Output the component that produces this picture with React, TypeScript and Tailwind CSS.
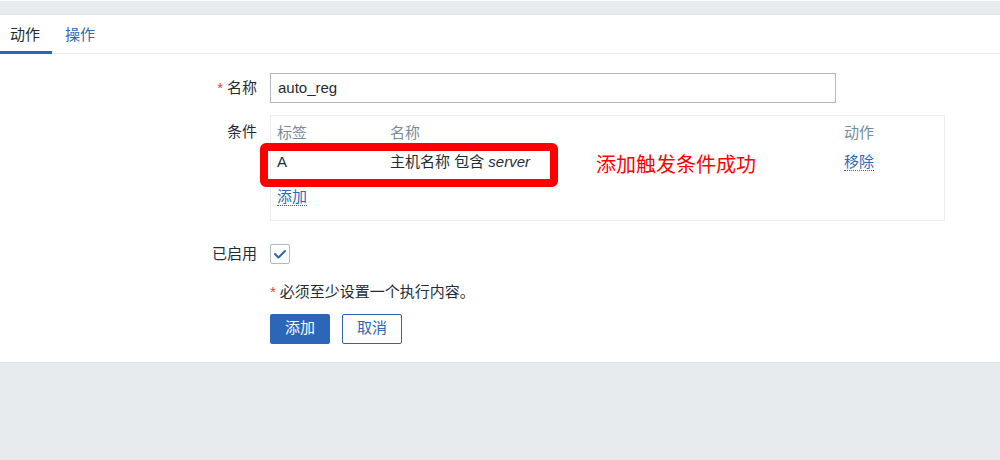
const font = { fontFamily: '"Liberation Sans", "Noto Sans CJK SC", sans-serif' };

function Link({ children }: { children: React.ReactNode }) {
  return (
    <span className="text-[#2a6ab8] border-b border-dotted border-[#2a6ab8] leading-[18px]">{children}</span>
  );
}

export default function App() {
  return (
    <div className="w-[1000px] h-[460px] bg-[#e8ebee] text-[15px] text-[#1f2c33]" style={font}>
      <div className="h-[1px] bg-white" />
      <div className="h-[13px]" />
      <div className="bg-white border-y border-[#dfe4e7] h-[349px]">
        {/* tabs */}
        <div className="flex h-[39px] border-b border-[#ebeef0]">
          <div className="w-[52px] flex items-center justify-center border-b-[3px] border-[#2b67b6] pt-[4px] pr-[2px] -mb-[1px]">
            动作
          </div>
          <div className="px-[13px] flex items-center text-[#2a6ab8] pt-[2px]">操作</div>
        </div>

        <div className="pt-[19px]">
          {/* name */}
          <div className="flex items-center">
            <div className="w-[257px] text-right">
              <span className="text-[#d64541] mr-[4px]">*</span>名称
            </div>
            <div className="ml-[13px] w-[566px] h-[30px] border border-[#acbbc2] flex items-center px-[7px]">
              auto_reg
            </div>
          </div>

          {/* conditions */}
          <div className="flex mt-[12px]">
            <div className="w-[257px] text-right pt-[6px]">条件</div>
            <div className="ml-[13px] relative w-[675px] h-[106px] border border-[#ebeef0] px-[6px] pt-[8px]">
              <div className="flex text-[#768d99] h-[18px] leading-[18px]">
                <div className="w-[113px]">标签</div>
                <div className="w-[454px]">名称</div>
                <div>动作</div>
              </div>
              <div className="flex h-[18px] leading-[18px] mt-[11px]">
                <div className="w-[113px]">A</div>
                <div className="w-[454px]">
                  主机名称 包含 <span className="italic">server</span>
                </div>
                <div>
                  <Link>移除</Link>
                </div>
              </div>
              <div className="mt-[15px] h-[20px]">
                <Link>添加</Link>
              </div>
              <div className="absolute left-[-11px] top-[27px] w-[298px] h-[44px] border-[8px] border-[#ff0000] rounded-[6px]" />
              <div className="absolute left-[325px] top-[36px] text-[20px] leading-[26px] text-[#ff0000]">
                添加触发条件成功
              </div>
            </div>
          </div>

          {/* enabled */}
          <div className="flex items-center mt-[22px]">
            <div className="w-[257px] text-right">已启用</div>
            <div className="ml-[13px] w-[20px] h-[20px] border border-[#acbbc2] rounded-[2px] flex items-center justify-center">
              <svg width="14" height="14" viewBox="0 0 14 14" fill="none">
                <path d="M2 7 L5.5 10.5 L12 4" stroke="#2b67b6" strokeWidth="2" strokeLinecap="round" strokeLinejoin="round" />
              </svg>
            </div>
          </div>

          {/* note */}
          <div className="ml-[270px] mt-[17px] h-[18px] leading-[18px]">
            <span className="text-[#d64541] mr-[4px]">*</span>必须至少设置一个执行内容。
          </div>

          {/* buttons */}
          <div className="ml-[270px] mt-[13px] flex gap-[12px]">
            <div className="w-[60px] h-[30px] bg-[#2b67b6] text-white rounded-[2px] flex items-center justify-center">
              添加
            </div>
            <div className="w-[60px] h-[30px] bg-white border border-[#2b67b6] text-[#2b67b6] rounded-[2px] flex items-center justify-center">
              取消
            </div>
          </div>
        </div>
      </div>
    </div>
  );
}
